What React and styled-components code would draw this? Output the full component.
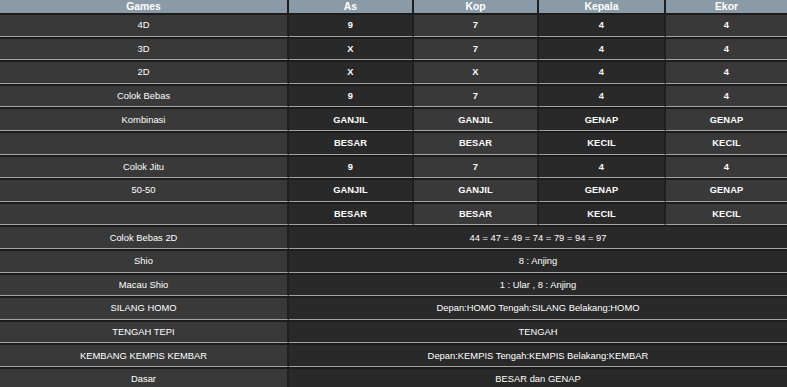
import React from 'react'
import styled, { createGlobalStyle } from 'styled-components'

const Global = createGlobalStyle`
  html, body {
    margin: 0;
    padding: 0;
    background: #1e1e1e;
  }
  body {
    font-family: "Liberation Sans", Arial, sans-serif;
    color: #fff;
  }
`

const Table = styled.table`
  width: 787px;
  table-layout: fixed;
  border-collapse: separate;
  border-spacing: 0;
  background: #1c1c1c;
`

const HeadCell = styled.th`
  height: 13px;
  padding: 0;
  background: #8a9ba7;
  color: #fff;
  font-size: 10.4px;
  font-weight: bold;
  line-height: 13px;
  text-align: center;
  border-right: 2px solid #1f1f1f;
  &:last-child { border-right: none; }
`

const Cell = styled.td`
  height: 20.6px;
  padding: 0;
  text-align: center;
  vertical-align: middle;
  font-size: ${p => (p.$strong ? '9.3px' : '9.4px')};
  font-weight: ${p => (p.$strong ? 'bold' : 'normal')};
  letter-spacing: ${p => (p.$strong ? '0.1px' : '0')};
  line-height: 12px;
  color: #fff;
  background: ${p => (p.$dark ? '#292929' : '#393939')};
  border-top: 2px solid #1c1c1c;
  border-bottom: 1px solid #a3a3a3;
  border-right: 2px solid #1f1f1f;
  &:last-child { border-right: none; }
`

const heads = ['Games', 'As', 'Kop', 'Kepala', 'Ekor']
const widths = [289, 125, 125, 127, 121]

const grid = [
  ['4D', '9', '7', '4', '4'],
  ['3D', 'X', '7', '4', '4'],
  ['2D', 'X', 'X', '4', '4'],
  ['Colok Bebas', '9', '7', '4', '4'],
  ['Kombinasi', 'GANJIL', 'GANJIL', 'GENAP', 'GENAP'],
  ['', 'BESAR', 'BESAR', 'KECIL', 'KECIL'],
  ['Colok Jitu', '9', '7', '4', '4'],
  ['50-50', 'GANJIL', 'GANJIL', 'GENAP', 'GENAP'],
  ['', 'BESAR', 'BESAR', 'KECIL', 'KECIL'],
]

const spans = [
  ['Colok Bebas 2D', '44 = 47 = 49 = 74 = 79 = 94 = 97'],
  ['Shio', '8 : Anjing'],
  ['Macau Shio', '1 : Ular , 8 : Anjing'],
  ['SILANG HOMO', 'Depan:HOMO Tengah:SILANG Belakang:HOMO'],
  ['TENGAH TEPI', 'TENGAH'],
  ['KEMBANG KEMPIS KEMBAR', 'Depan:KEMPIS Tengah:KEMPIS Belakang:KEMBAR'],
  ['Dasar', 'BESAR dan GENAP'],
]

export default function App() {
  return (
    <>
      <Global />
      <Table>
        <colgroup>
          {widths.map((w, i) => <col key={i} style={{ width: w }} />)}
        </colgroup>
        <thead>
          <tr>
            {heads.map(h => <HeadCell key={h}>{h}</HeadCell>)}
          </tr>
        </thead>
        <tbody>
          {grid.map((row, r) => (
            <tr key={r}>
              {row.map((v, c) => (
                <Cell key={c} $dark={c % 2 === 1} $strong={c > 0}>{v}</Cell>
              ))}
            </tr>
          ))}
          {spans.map(([name, value]) => (
            <tr key={name}>
              <Cell>{name}</Cell>
              <Cell $dark colSpan={4}>{value}</Cell>
            </tr>
          ))}
        </tbody>
      </Table>
    </>
  )
}
